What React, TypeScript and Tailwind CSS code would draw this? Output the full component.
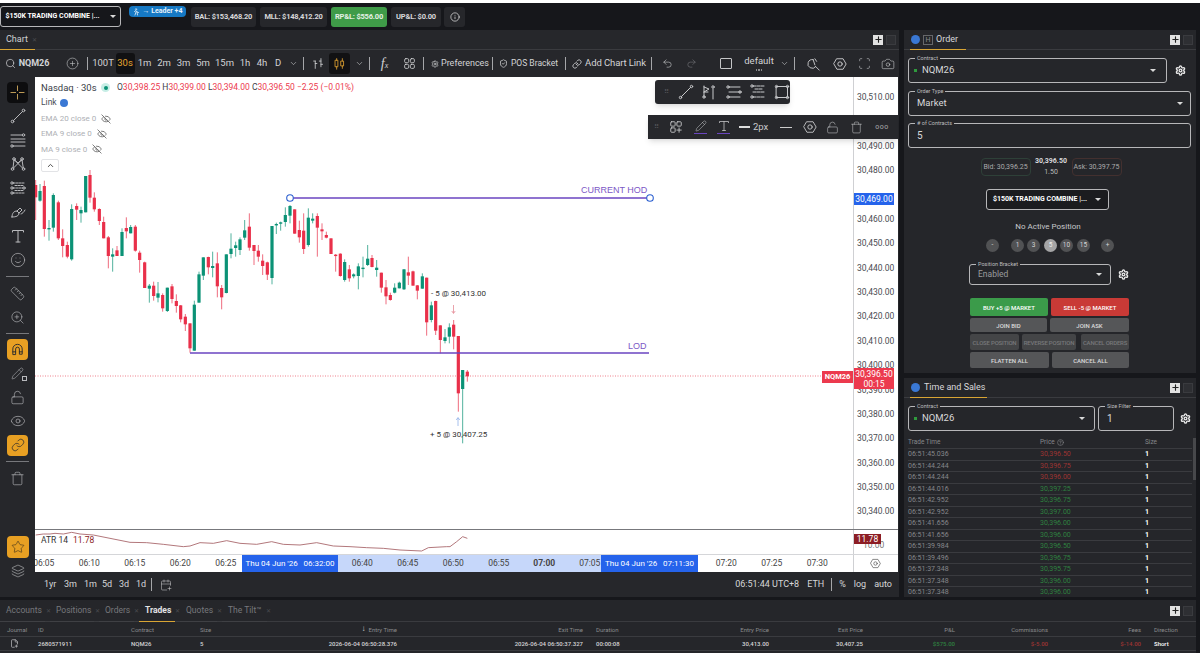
import React from "react";
import { Search, CirclePlus, ChevronDown, ChevronUp, Undo2, Redo2, Scan, Camera, Smile, Ruler, ZoomIn, LockOpen, Eye, EyeOff, Link, Trash, Star, Layers, Pencil, Settings, ShieldCheck, Info, FilePlus2, CalendarPlus, CircleHelp, Plus } from "lucide-react";

const Z = (c: any[], ox: number, oy: number) => c.map(([x, h, t, b, l, col]) => ({ x: ox + x / 3, h: oy + h / 3, t: oy + t / 3, b: oy + b / 3, l: oy + l / 3, col }));
const A: any[] = [
[17,60,75,112,180,"r"],[30,72,93,122,125,"g"],[43,62,78,207,230,"r"],[57,180,204,206,242,"g"],[70,100,105,203,215,"g"],[85,122,127,235,240,"r"],[98,208,235,258,292,"r"],[112,245,255,290,295,"r"],[125,133,147,298,302,"g"],[140,130,138,149,180,"r"],[153,140,150,160,188,"g"],[167,48,48,157,157,"g"],[180,30,45,113,128,"r"],[193,97,113,148,155,"r"],[208,145,147,183,195,"r"],[221,170,186,235,235,"r"],[235,228,232,288,325,"r"],[248,265,283,290,335,"g"],[261,258,271,288,288,"r"],[276,205,216,288,288,"g"],[289,172,204,214,235,"r"],[302,195,201,220,220,"g"],[316,195,200,272,275,"r"],[329,272,278,300,338,"r"],[344,305,307,384,384,"r"],[358,372,377,386,428,"g"],[371,365,377,408,422,"r"],[384,366,400,413,427,"g"],[398,400,405,445,455,"r"],[412,383,383,453,456,"g"],[426,372,379,417,430,"r"],[439,403,423,438,458,"r"],[452,435,436,478,487,"r"],[466,462,470,493,513,"r"],[480,490,490,565,578,"r"],[493,422,434,572,572,"g"],[507,335,343,428,428,"g"],[520,292,292,347,360,"g"],[535,290,291,322,343,"r"],[548,275,318,324,352,"g"],[562,277,310,379,412,"r"],[575,375,384,412,448,"r"],[589,283,283,399,400,"g"],[603,220,266,282,295,"g"],[617,245,256,264,290,"g"],[630,232,238,270,285,"g"],[644,180,211,233,240,"g"],[658,160,200,263,272,"r"],[672,255,255,273,315,"r"],[685,255,272,290,305,"r"],[698,283,302,318,345,"r"],[712,305,307,344,360,"r"]];
const B: any[] = [
[36,138,138,294,313,"g"],[49,128,132,136,162,"g"],[62,125,127,131,152,"g"],[76,82,105,126,140,"g"],[90,75,78,107,130,"g"],[104,88,88,161,161,"r"],[118,122,150,172,188,"r"],[131,100,152,207,222,"r"],[145,85,113,195,200,"g"],[158,100,116,122,130,"g"],[172,100,108,143,230,"r"],[186,130,148,154,180,"r"],[199,155,165,173,175,"r"],[213,175,175,222,222,"r"],[227,222,224,226,275,"r"],[241,220,221,288,290,"r"],[254,238,246,300,305,"g"],[268,255,268,295,305,"r"],[281,280,283,289,295,"g"],[295,250,259,288,328,"g"],[309,230,263,265,292,"g"],[323,195,236,255,258,"g"],[336,225,234,261,262,"r"],[350,240,263,270,290,"g"],[364,278,278,323,338,"r"],[378,300,322,349,373,"r"],[391,338,345,360,362,"r"],[404,310,323,338,340,"g"],[418,305,308,325,325,"g"],[432,267,268,328,330,"g"],[445,230,277,287,315,"r"],[459,272,274,317,317,"r"],[472,315,316,332,358,"r"],[487,280,289,326,326,"g"],[500,293,293,427,467,"r"],[514,365,376,420,427,"g"],[527,362,363,452,465,"r"],[541,436,436,480,520,"r"],[555,447,472,483,490,"g"],[568,430,442,470,490,"g"],[581,420,434,470,508,"r"],[595,468,468,640,695,"r"],[608,570,570,627,790,"g"],[622,570,575,589,605,"r"]];
const candles = [...Z(A, 30, 160), ...Z(B, 260, 180)];
const atr6 = [[107,45],[130,42],[150,42],[165,40],[190,42],[215,37],[240,42],[280,45],[330,55],[390,67],[440,68],[490,73],[550,80],[570,78],[600,68],[640,70],[680,62],[720,70],[770,73],[815,65],[850,73],[900,75],[950,68],[1000,78],[1050,80],[1100,83],[1150,85],[1200,90],[1265,93],[1285,83],[1340,80]];
const atr7 = [[0,80],[20,65],[38,50],[52,55]];
const atrPts = [...atr6.map(([x, y]) => [x / 3, y / 3 + 520]), ...atr7.map(([x, y]) => [450 + x / 3, y / 3 + 520])].map((p) => p.join(",")).join(" ");

const Ic = ({ children, s = 16, className = "" }: any) => (
  <svg width={s} height={s} viewBox="0 0 16 16" fill="none" stroke="currentColor" strokeWidth="1" strokeLinecap="round" strokeLinejoin="round" className={className}>{children}</svg>
);
const Rail = ({ children, active }: any) => (
  <div className={"w-full h-[24px] flex items-center justify-center text-[#b9babd]"}>
    <div className={"w-[21px] h-[21px] rounded-[4px] flex items-center justify-center " + (active === "dark" ? "bg-[#0d0d0f]" : active ? "bg-[#e8a023] text-[#2a2a2d]" : "")}>{children}</div>
  </div>
);
const RSep = ({ c }: any) => <div className={"w-[23px] h-px bg-[#77787c] shrink-0 " + c} />;
const TSep = () => <div className="w-px h-[13px] bg-[#a5a6a9]" />;
const Cell = ({ w, children, c = "" }: any) => <div className={"flex items-center justify-center shrink-0 h-full " + c} style={{ width: w }}>{children}</div>;
const PanelCtl = () => (
  <div className="flex items-center gap-[3px] ml-auto mr-[3px]">
    <div className="w-[10px] h-[10px] bg-[#e2e2e2] flex items-center justify-center text-[#222]"><Plus size={9} strokeWidth={3} /></div>
    <div className="w-[10px] h-[10px] bg-[#2e2f33] border border-[#3a3b3f]" />
  </div>
);
const Dot = () => <span className="w-[9px] h-[9px] rounded-full bg-[#3a78d4] inline-block shrink-0" />;
const Field = ({ label, w, children, c = "" }: any) => (
  <div className={"relative h-[25px] border border-[#b7b7b9] rounded-[3px] flex items-center shrink-0 " + c} style={{ width: w }}>
    <span className="absolute -top-[5px] left-[6px] px-[2px] bg-[#25262a] text-[5.5px] leading-[8px] text-[#bdbdbf] whitespace-nowrap">{label}</span>
    {children}
  </div>
);
const Caret = ({ c = "" }: any) => <span className={"w-0 h-0 shrink-0 border-l-[3px] border-r-[3px] border-t-[3px] border-l-transparent border-r-transparent border-t-[#d9d9d9] " + c} />;
const Gear = ({ c = "" }: any) => <Settings size={11} strokeWidth={3} className={"text-[#e8e8e8] " + c} />;
const Act = ({ w, c = "bg-[#555658] text-[#dcdcdc]", h = "h-[16px]", children }: any) => <div className={"rounded-[2px] flex items-center justify-center text-[6px] font-medium whitespace-nowrap shrink-0 overflow-hidden " + h + " " + c} style={{ width: w }}>{children}</div>;
const Num = ({ children, on }: any) => <span className={"w-[13px] h-[13px] rounded-full flex items-center justify-center text-[6.5px] shrink-0 " + (on ? "bg-[#a5a5a6] text-[#eee]" : "bg-[#515254] text-[#d4d4d4]")}>{children}</span>;
const Stat = ({ w, children, c = "" }: any) => <div className={"h-[20px] rounded-[3px] flex items-center justify-center text-[7.5px] font-bold tracking-[-0.2px] whitespace-nowrap shrink-0 " + c} style={{ width: w }}>{children}</div>;

const prices = ["30,510.00","","30,490.00","30,480.00","","30,460.00","30,450.00","30,440.00","30,430.00","30,420.00","30,410.00","30,400.00","30,390.00","30,380.00","30,370.00","30,360.00","30,350.00","30,340.00"];
const times = ["06:05","06:10","06:15","06:20","06:25","","","06:40","06:45","06:50","06:55","07:00","07:05","","","07:20","07:25","07:30"];
const tas: [string,string,string][] = [["06:51:45.036","30,396.50","r"],["06:51:44.244","30,396.75","r"],["06:51:44.244","30,396.00","r"],["06:51:44.016","30,397.25","g"],["06:51:42.952","30,396.75","g"],["06:51:42.952","30,397.00","g"],["06:51:41.656","30,396.00","g"],["06:51:41.656","30,396.00","g"],["06:51:39.984","30,396.50","g"],["06:51:39.496","30,396.75","g"],["06:51:37.348","30,395.75","g"],["06:51:37.348","30,396.00","g"],["06:51:37.348","30,396.00","g"]];
const bottomCols = "grid grid-cols-[38px_93px_69px_60px_137px_186px_13px_80px_93px_94px_92px_93px_93px_13px_55px]";

function Tools() {
  return (
    <div className="flex items-center h-full text-[9.5px] text-[#d3d4d6] whitespace-nowrap">
      <Cell w={5} /><Search size={11} strokeWidth={1.5} className="shrink-0" />
      <Cell w={33} c="font-bold text-[9px] pl-[3px]">NQM26</Cell>
      <Cell w={35} c="pl-[12px]"><CirclePlus size={13} strokeWidth={1} /></Cell>
      <Cell w={6}><TSep /></Cell>
      <Cell w={25} c="pl-[1px]">100T</Cell>
      <Cell w={20}><span className="w-[19px] h-[21px] bg-[#111113] rounded-[3px] text-[#e5a531] flex items-center justify-center">30s</span></Cell>
      <Cell w={19}>1m</Cell><Cell w={20}>2m</Cell><Cell w={19}>3m</Cell><Cell w={20}>5m</Cell><Cell w={23}>15m</Cell><Cell w={18}>1h</Cell><Cell w={16}>4h</Cell><Cell w={16}>D</Cell>
      <Cell w={14}><ChevronDown size={9} strokeWidth={1.5} /></Cell>
      <Cell w={7}><TSep /></Cell>
      <Cell w={22}><Ic s={13}><path d="M4 14V5M4 5H2M4 8h2M11 12V2M11 5H9M11 9h2" /></Ic></Cell>
      <Cell w={21}><span className="w-[21px] h-[21px] bg-[#111113] rounded-[3px] flex items-center justify-center text-[#e5a531]"><Ic s={13}><rect x="3" y="4" width="3" height="8" /><path d="M4.5 2v2M4.5 12v3" /><rect x="10" y="5" width="3" height="6" /><path d="M11.5 2v3M11.5 11v3" /></Ic></span></Cell>
      <Cell w={18}><ChevronDown size={9} strokeWidth={1.5} /></Cell>
      <Cell w={2}><TSep /></Cell>
      <Cell w={29} c="italic text-[14px] [font-family:'Liberation_Serif',serif]">f<span className="text-[8px] mt-[5px]">x</span></Cell>
      <Cell w={20}><Ic s={13}><rect x="2" y="2" width="5" height="5" rx="1.5" /><rect x="9" y="2" width="5" height="5" rx="1.5" /><rect x="2" y="9" width="5" height="5" rx="1.5" /><rect x="9" y="9" width="5" height="5" rx="1.5" /></Ic></Cell>
      <Cell w={5} c="pl-[4px]"><TSep /></Cell>
      <Cell w={68} c="gap-[2px] pl-[4px] text-[9px]"><Settings size={8} /><span>Preferences</span></Cell>
      <Cell w={1}><TSep /></Cell>
      <Cell w={72} c="gap-[3px] text-[8.5px] justify-start pl-[6px]"><ShieldCheck size={9} /><span>POS Bracket</span></Cell>
      <Cell w={1}><TSep /></Cell>
      <Cell w={85} c="gap-[3px] pl-[1px] text-[9.5px] tracking-[-0.1px]"><Link size={10} /><span>Add Chart Link</span></Cell>
      <Cell w={1}><TSep /></Cell>
      <Cell w={27} c="pl-[3px]"><Undo2 size={11} strokeWidth={1.25} /></Cell>
      <Cell w={24} c="text-[#77787c]"><Redo2 size={11} strokeWidth={1.25} /></Cell>
      <Cell w={45}><span className="w-[12px] h-[11px] border border-[#c4c5c7] rounded-[1px]" /></Cell>
      <Cell w={22} c="flex-col leading-[10px] text-[9.5px]"><span>default</span><span className="mt-[3px] flex gap-[1px]"><span className="w-[1.5px] h-[1.5px] bg-[#8a8b8d]" /><span className="w-[1.5px] h-[1.5px] bg-[#8a8b8d]" /><span className="w-[1.5px] h-[1.5px] bg-[#8a8b8d]" /></span></Cell>
      <Cell w={29}><ChevronDown size={9} strokeWidth={1.5} /></Cell>
      <Cell w={1} c="-ml-[5px]"><TSep /></Cell>
      <Cell w={29} c="ml-[4px]"><Ic s={14}><path d="M7 3a5 5 0 1 0 3 8" /><path d="M7 3l2 6M10 11l4 4M9 2l2 3" /></Ic></Cell>
      <Cell w={24}><Ic s={14}><path d="M4.5 2h7L15 8l-3.5 6h-7L1 8z" /><circle cx="8" cy="8" r="2.5" /></Ic></Cell>
      <Cell w={24}><Scan size={13} strokeWidth={1} /></Cell>
      <Cell w={24}><Camera size={14} strokeWidth={1} /></Cell>
    </div>
  );
}

function RailCol() {
  return (
    <div className="w-[35px] h-[520px] shrink-0 flex flex-col items-center pt-[3px]">
      <Rail active="dark"><Ic s={15}><path d="M8 1v5M8 10v5M1 8h5M10 8h5" stroke="#c9a35a" /></Ic></Rail>
      <Rail><Ic><circle cx="2.5" cy="13.5" r="1.3" /><circle cx="13.5" cy="2.5" r="1.3" /><path d="M3.5 12.5l9-9" /></Ic></Rail>
      <Rail><Ic><path d="M1 3h11M1 7h14M1 10h14M3 14h12" /><circle cx="13.5" cy="3" r="1.2" /><circle cx="2" cy="14" r="1.2" /></Ic></Rail>
      <Rail><Ic><circle cx="2.5" cy="13" r="1.3" /><circle cx="13.5" cy="13" r="1.3" /><circle cx="4" cy="3" r="1.3" /><circle cx="12" cy="3" r="1.3" /><path d="M3 12l1-8M4.5 4l8 8M11.5 4l-8 8M12 4l1.3 8M4 3.5L8 7l4-3.5" /></Ic></Rail>
      <Rail><Ic><circle cx="2" cy="3" r="1.2" /><circle cx="2" cy="8" r="1.2" /><circle cx="2" cy="13" r="1.2" /><circle cx="14" cy="8" r="1.2" /><path d="M3 3h12M3 8h10M3 13h12M5 5.5h8M5 10.5h8" strokeDasharray="2 1" /></Ic></Rail>
      <Rail><Ic><path d="M2 13c0-4 2-6 5-6l2 2c0 3-3 4-7 4zM7 7l3-3 2 2-3 3M11 10c1 0 3-2 4-4" /></Ic></Rail>
      <Rail><Ic><path d="M2.5 4V2.5h11V4M8 2.5V14M6 14h4" /></Ic></Rail>
      <Rail><Smile size={16} strokeWidth={1} /></Rail>
      <RSep c="mt-[4px] mb-[4px]" />
      <Rail><Ruler size={15} strokeWidth={1} /></Rail>
      <Rail><ZoomIn size={15} strokeWidth={1} /></Rail>
      <RSep c="mt-[4px] mb-[3px]" />
      <Rail active><Ic s={15}><path d="M3 13V7.5a5 5 0 0 1 10 0V13h-3V7.5a2 2 0 0 0-4 0V13zM3 10.5h3M10 10.5h3" /></Ic></Rail>
      <Rail><span className="relative flex"><Pencil size={13} strokeWidth={1} /><span className="absolute -right-[3px] -bottom-[1px] w-[5px] h-[5px] border border-[#b9babd] bg-[#26272b]" /></span></Rail>
      <Rail><LockOpen size={15} strokeWidth={1} /></Rail>
      <Rail><Eye size={16} strokeWidth={1} /></Rail>
      <Rail active><Link size={14} strokeWidth={1.25} /></Rail>
      <RSep c="mt-[4px] mb-[4px]" />
      <Rail><Trash size={15} strokeWidth={1} /></Rail>
      <div className="mt-auto w-[22px] h-[22px] bg-[#e8a023] rounded-[4px] flex items-center justify-center text-[#33291a]"><Star size={14} strokeWidth={1} /></div>
      <div className="h-[24px] mt-[1px] mb-[14px] flex items-center text-[#c7c8ca]"><Layers size={14} strokeWidth={1} /></div>
    </div>
  );
}

function Canvas() {
  return (
    <div className="relative flex-1 h-[452px] overflow-hidden">
      <svg width="818" height="452" viewBox="35 77 818 452" className="absolute left-0 top-0">
        <line x1="35" y1="376" x2="853" y2="376" stroke="#e8475a" strokeWidth="0.7" strokeDasharray="1 1.5" />
        {candles.map((c, i) => {
          const col = c.col === "r" ? "#e9304a" : "#0b9276";
          return (
            <g key={i}>
              <line x1={c.x} x2={c.x} y1={c.h} y2={c.l} stroke={col} strokeWidth="1" opacity="0.7" />
              <rect x={c.x - 1.6} y={c.t} width="3.2" height={Math.max(c.b - c.t, 1.4)} fill={col} />
            </g>
          );
        })}
        <line x1="290" y1="198" x2="650" y2="198" stroke="#6a45c0" strokeWidth="1.3" />
        <line x1="190" y1="353" x2="649" y2="353" stroke="#6a45c0" strokeWidth="1.3" />
        <circle cx="290" cy="198" r="3.3" fill="#fff" stroke="#2b5fd0" strokeWidth="1.1" />
        <circle cx="650" cy="198" r="3.3" fill="#fff" stroke="#2b5fd0" strokeWidth="1.1" />
        <path d="M453.5 305v8M451.8 311l1.7 2.5 1.7-2.5" stroke="#e58a95" strokeWidth="0.8" fill="none" />
        <path d="M458 418v8M456.3 420l1.7-2.5 1.7 2.5" stroke="#8fb0e8" strokeWidth="0.8" fill="none" />
      </svg>
      <span className="absolute left-[546px] top-[107px] text-[9px] leading-[12px] text-[#7c58c6] [font-family:'Liberation_Sans',sans-serif] whitespace-nowrap">CURRENT HOD</span>
      <span className="absolute left-[593px] top-[263px] text-[9px] leading-[12px] text-[#7c58c6] [font-family:'Liberation_Sans',sans-serif]">LOD</span>
      <span className="absolute left-[396px] top-[211px] text-[8px] leading-[12px] text-[#333] whitespace-nowrap">- 5 @ 30,413.00</span>
      <span className="absolute left-[395px] top-[352px] text-[8px] leading-[12px] text-[#333] whitespace-nowrap">+ 5 @ 30,407.25</span>
      <span className="absolute left-[787px] top-[294px] w-[31px] h-[12px] bg-[#ec3a4e] text-white text-[7.5px] font-bold flex items-center justify-center">NQM26</span>
      <div className="absolute left-[6px] top-[3px] flex flex-col text-[8px] leading-[15.4px] text-[#aeb0b5]">
        <div className="flex items-center text-[8.5px] text-[#ec3a4e] whitespace-nowrap">
          <span className="w-[60px] text-[9.5px] text-[#3a3e48]">Nasdaq · 30s</span>
          <span className="w-[9px] h-[9px] rounded-full bg-[#c7eee6] flex items-center justify-center"><span className="w-[4px] h-[4px] rounded-full bg-[#0b9276]" /></span>
          <span className="ml-[7px]"><span className="text-[#3a3e48]">O</span>30,398.25 <span className="text-[#3a3e48]">H</span>30,399.00 <span className="text-[#3a3e48]">L</span>30,394.00 <span className="text-[#3a3e48]">C</span>30,396.50 −2.25 (−0.01%)</span>
        </div>
        <div className="flex items-center gap-[3px] text-[8.5px] text-[#4a4e58]">Link <span className="w-[8px] h-[8px] rounded-full bg-[#3a78d4]" /></div>
        <div className="flex items-center gap-[5px]">EMA 20 close 0 <EyeOff size={10} className="text-[#666]" /></div>
        <div className="flex items-center gap-[5px]">EMA 9 close 0 <EyeOff size={10} className="text-[#666]" /></div>
        <div className="flex items-center gap-[5px]">MA 9 close 0 <EyeOff size={10} className="text-[#666]" /></div>
        <div className="mt-[2px] w-[18px] h-[13px] border border-[#e2e3e6] rounded-[2px] flex items-center justify-center text-[#444]"><ChevronUp size={9} strokeWidth={2.5} /></div>
      </div>
    </div>
  );
}

function FloatBars() {
  return (
    <>
      <div className="absolute left-[620px] top-[3px] w-[135px] h-[24px] bg-[#27282c] rounded-[3px] shadow-md flex items-center text-[#c9cacc]">
        <span className="w-[14px] ml-[4px] text-[#55565a] text-[7px] leading-[7px] text-center">⠿</span>
        <span className="ml-[5px] flex items-center gap-[8px]">
          <Ic><circle cx="2.5" cy="13.5" r="1.2" /><circle cx="13.5" cy="2.5" r="1.2" /><path d="M3.5 12.5l9-9" /></Ic>
          <Ic><path d="M2 2v11M2 3l5 2-5 3M2 8h4M11 5v10" /><circle cx="2" cy="13" r="1.2" /><circle cx="11" cy="3" r="1.2" /></Ic>
          <Ic><path d="M3 3h11M3 8h11M3 13h11" /><circle cx="2" cy="3" r="1.2" /><circle cx="14" cy="8" r="1.2" /><circle cx="2" cy="13" r="1.2" /></Ic>
          <Ic><path d="M3 2h12M3 8h12M3 13h12M5 5h8" strokeDasharray="3 1" /><circle cx="2" cy="2" r="1.2" /><circle cx="2" cy="13" r="1.2" /></Ic>
          <Ic><rect x="2.5" y="2.5" width="11" height="11" /><circle cx="2.5" cy="2.5" r="1.2" /><circle cx="13.5" cy="2.5" r="1.2" /><circle cx="2.5" cy="13.5" r="1.2" /><circle cx="13.5" cy="13.5" r="1.2" /></Ic>
        </span>
      </div>
      <div className="absolute left-[613px] top-[38px] w-[250px] h-[24px] bg-[#27282c] shadow-md flex items-center text-[#c9cacc] text-[9.5px]">
        <span className="w-[14px] ml-[1px] text-[#55565a] text-[7px] leading-[7px] text-center">⠿</span>
        <span className="ml-[6px] flex"><Ic s={14}><rect x="2" y="2" width="5" height="5" rx="1" /><rect x="9" y="2" width="5" height="5" rx="1" /><rect x="2" y="9" width="5" height="5" rx="1" /><path d="M9 11.5h5M11.5 9v5" /></Ic></span>
        <span className="ml-[11px] flex flex-col items-center gap-[1px]"><Pencil size={12} strokeWidth={1} /><span className="w-[13px] h-[1.5px] bg-[#6a45c0]" /></span>
        <span className="ml-[10px] flex flex-col items-center gap-[1px]"><Ic s={12}><path d="M2 3.5V2h12v1.5M8 2v12M6 14h4" /></Ic><span className="w-[13px] h-[1.5px] bg-[#6a45c0]" /></span>
        <span className="ml-[9px] w-[11px] h-[1.5px] bg-[#ddd]" />
        <span className="ml-[3px]">2px</span>
        <span className="ml-[12px] w-[12px] h-px bg-[#ccc]" />
        <span className="ml-[11px] flex"><Ic s={14}><path d="M4.5 2h7L15 8l-3.5 6h-7L1 8z" /><circle cx="8" cy="8" r="2.5" /></Ic></span>
        <span className="ml-[9px] flex"><LockOpen size={13} strokeWidth={1} /></span>
        <span className="ml-[11px] flex"><Trash size={13} strokeWidth={1} /></span>
        <span className="ml-[12px] text-[7px] tracking-[0.5px] text-[#a8a9ab]">ooo</span>
      </div>
    </>
  );
}

function ChartBody() {
  return (
    <div className="relative w-[863px] h-[495px] bg-white flex flex-col text-[#444]">
      <div className="flex h-[452px]">
        <Canvas />
        <div className="relative w-[45px] h-[452px] border-l border-[#cfd0d3] pt-[8px] text-[8.5px] text-[#4a4c52]">
          {prices.map((p, i) => <div key={i} className="h-[24.4px] flex items-center pl-[3px]">{p}</div>)}
          <div className="absolute left-0 top-[116px] w-[40px] h-[12px] bg-[#2563eb] text-white flex items-center justify-center">30,469.00</div>
          <div className="absolute left-0 top-[291px] w-[40px] h-[21px] bg-[#ec3a4e] text-white flex flex-col items-center justify-center leading-[10px]"><span>30,396.50</span><span>00:15</span></div>
        </div>
      </div>
      <div className="flex h-[25px] border-t border-[#77787c]">
        <div className="relative flex-1 overflow-hidden">
          <svg width="818" height="25" viewBox="35 530 818 25" className="absolute left-0 top-0"><polyline points={atrPts} fill="none" stroke="#a9686c" strokeWidth="0.9" /></svg>
          <div className="absolute left-[6px] top-[4px] flex gap-[5px] text-[8.5px] leading-[12px]"><span className="text-[#333]">ATR 14</span><span className="text-[#8c1d24]">11.78</span></div>
        </div>
        <div className="relative w-[45px] border-l border-[#cfd0d3] text-[8.5px]">
          <span className="absolute left-[9px] top-[10px] leading-[10px] text-[#777]">10.00</span>
          <span className="absolute left-0 top-[4px] w-[27px] h-[10px] bg-[#8c1d24] text-white flex items-center justify-center">11.78</span>
        </div>
      </div>
      <div className="flex h-[18px] border-t border-[#d5d6d9] text-[8.5px] text-[#444]">
        <div className="relative flex-1 overflow-hidden flex items-center">
          <div className="absolute left-[303px] top-0 w-[263px] h-full bg-[#c6d7fa]" />
          <div className="relative flex -ml-[14px]">{times.map((t, i) => <span key={i} className={"w-[45.5px] text-center shrink-0 " + (t === "07:00" ? "font-bold" : "")}>{t}</span>)}</div>
          <div className="absolute left-[207px] top-0 w-[96px] h-full bg-[#2563eb] text-white flex items-center justify-center whitespace-pre text-[8px]">Thu 04 Jun '26   06:32:00</div>
          <div className="absolute left-[566px] top-0 w-[97px] h-full bg-[#2563eb] text-white flex items-center justify-center whitespace-pre text-[8px]">Thu 04 Jun '26   07:11:30</div>
        </div>
        <div className="w-[45px] border-l border-[#cfd0d3] flex items-center justify-center text-[#555] pr-[2px]"><Ic s={11}><path d="M4.5 2h7L15 8l-3.5 6h-7L1 8z" /><circle cx="8" cy="8" r="2.5" /></Ic></div>
      </div>
      <FloatBars />
    </div>
  );
}

function RangeBar() {
  return (
    <div className="h-[25px] flex items-center text-[9px] text-[#d6d7d9] pl-[9px] pr-[6px] whitespace-nowrap">
      <span className="w-[20px]">1yr</span><span className="w-[20px]">3m</span><span className="w-[18px]">1m</span><span className="w-[17px]">5d</span><span className="w-[17px]">3d</span><span className="w-[13px]">1d</span>
      <span className="ml-[2px] w-px h-[13px] bg-[#a5a6a9]" />
      <CalendarPlus size={12} strokeWidth={1} className="ml-[8px]" />
      <span className="ml-auto">06:51:44 UTC+8</span><span className="ml-[8px]">ETH</span>
      <span className="ml-[7px] w-px h-[13px] bg-[#a5a6a9]" />
      <span className="ml-[7px]">%</span><span className="ml-[8px]">log</span><span className="ml-[8px]">auto</span>
    </div>
  );
}

function OrderPanel() {
  return (
    <div className="h-[343px] bg-[#25262a] flex flex-col text-[#d8d8da]">
      <div className="h-[20px] flex items-center border-b border-[#3a3b3f] relative pl-[7px] shrink-0">
        <Dot /><span className="ml-[3px] w-[10px] h-[10px] border border-[#66676a] text-[7px] leading-[8px] text-center text-[#8a8b8d]">H</span>
        <span className="ml-[3px] text-[9px]">Order</span>
        <span className="absolute left-[6px] bottom-[-1px] w-[56px] h-[1px] bg-[#d9a534]" />
        <PanelCtl />
      </div>
      <div className="px-[4px] pt-[8px] flex items-center">
        <Field label="Contract" w={259}><span className="ml-[5px] w-[3px] h-[3px] bg-[#2f9a3d]" /><span className="ml-[5px] text-[9.5px]">NQM26</span><Caret c="ml-auto mr-[10px]" /></Field>
        <Gear c="ml-[8px]" />
      </div>
      <div className="px-[4px] pt-[8px]"><Field label="Order Type" w={283}><span className="ml-[8px] text-[9.5px]">Market</span><Caret c="ml-auto mr-[7px]" /></Field></div>
      <div className="px-[4px] pt-[7px]"><Field label="# of Contracts" w={283}><span className="ml-[8px] text-[10px]">5</span></Field></div>
      <div className="mt-[8px] flex items-center justify-center gap-[5px] text-[7px] pl-[2px] whitespace-nowrap">
        <span className="w-[50px] h-[18px] rounded-[4px] border border-[#2e4038] flex items-center justify-center text-[#aaa]">Bid: 30,396.25</span>
        <span className="w-[31px] flex flex-col items-center leading-[11px]"><b className="font-bold">30,396.50</b><span className="text-[#bbb]">1.50</span></span>
        <span className="w-[50px] h-[18px] rounded-[4px] border border-[#43302f] flex items-center justify-center text-[#aaa]">Ask: 30,397.75</span>
      </div>
      <div className="mt-[11px] mx-auto -translate-x-[3px] w-[123px] h-[21px] border border-[#b7b7b9] rounded-[3px] bg-[#1b1c1f] flex items-center justify-center text-[7px] font-bold text-white gap-[8px] whitespace-nowrap">$150K TRADING COMBINE |... <Caret /></div>
      <div className="mt-[11px] text-center text-[8px] text-[#c8c8ca] pr-[4px] leading-[12px]">No Active Position</div>
      <div className="mt-[6px] flex items-center pl-[82px] h-[13px]">
        <Num>-</Num><span className="w-[12px]" /><Num>1</Num><span className="w-[3px]" /><Num>3</Num><span className="w-[4px]" /><Num on>5</Num><span className="w-[3px]" /><Num>10</Num><span className="w-[4px]" /><Num>15</Num><span className="w-[11px]" /><Num>+</Num>
      </div>
      <div className="mt-[12px] pl-[65px] flex items-center">
        <Field label="Position Bracket" w={142} c="!h-[21px]"><span className="ml-[8px] text-[8.5px] text-[#9b9c9e]">Enabled</span><Caret c="ml-auto mr-[8px]" /></Field>
        <Gear c="ml-[7px]" />
      </div>
      <div className="mt-[13px] pl-[66px] flex flex-col gap-[2px]">
        <div className="flex gap-[3px]"><Act w={78} h="h-[18px] text-[6.5px]" c="bg-[#3b9b4a] text-white">BUY +5 @ MARKET</Act><Act w={78} h="h-[18px] text-[6.5px]" c="bg-[#c93a36] text-white">SELL -5 @ MARKET</Act></div>
        <div className="flex gap-[3px]"><Act w={77} h="h-[14px]">JOIN BID</Act><Act w={79} h="h-[14px]">JOIN ASK</Act></div>
        <div className="flex gap-[3px]"><Act w={49} c="bg-[#444547] text-[#77787a] tracking-[-0.2px]">CLOSE POSITION</Act><Act w={54} c="bg-[#444547] text-[#77787a] tracking-[-0.2px]">REVERSE POSITION</Act><Act w={48} c="bg-[#444547] text-[#77787a] ml-[2px] tracking-[-0.2px]">CANCEL ORDERS</Act></div>
        <div className="flex gap-[3px]"><Act w={79}>FLATTEN ALL</Act><Act w={77}>CANCEL ALL</Act></div>
      </div>
    </div>
  );
}

function TasPanel() {
  return (
    <div className="relative h-[219px] mt-[5px] bg-[#25262a] flex flex-col text-[#d8d8da] overflow-hidden">
      <div className="h-[20px] flex items-center border-b border-[#3a3b3f] relative pl-[7px] shrink-0">
        <Dot /><span className="ml-[4px] text-[9px]">Time and Sales</span>
        <span className="absolute left-[6px] bottom-[-1px] w-[77px] h-[1px] bg-[#d9a534]" />
        <PanelCtl />
      </div>
      <div className="px-[4px] pt-[8px] flex items-center">
        <Field label="Contract" w={187}><span className="ml-[5px] w-[3px] h-[3px] bg-[#2f9a3d]" /><span className="ml-[5px] text-[9.5px]">NQM26</span><Caret c="ml-auto mr-[9px]" /></Field>
        <Field label="Size Filter" w={76} c="ml-[3px]"><span className="ml-[8px] text-[10px]">1</span></Field>
        <Gear c="ml-[6px]" />
      </div>
      <div className="mt-[6px] px-[4px] text-[6.5px] text-[#85868a] [&>div]:grid [&>div]:grid-cols-[132px_105px_1fr] [&>div]:items-center">
        <div className="h-[12px] border-b border-[#3a3b3f]"><span>Trade Time</span><span className="flex items-center gap-[2px]">Price <CircleHelp size={7} /></span><span>Size</span></div>
        {tas.map(([t, p, c], i) => (
          <div key={i} className="h-[11.5px] border-b border-[#3a3b3f] text-[7px]"><span>{t}</span><span className={c === "r" ? "text-[#9c3433]" : "text-[#2f8040]"}>{p}</span><span className="text-white font-bold">1</span></div>
        ))}
      </div>
      <div className="absolute right-[0px] top-[60px] w-[3px] h-[42px] bg-[#47484b]" />
    </div>
  );
}

function Bottom() {
  const Tab = ({ t, w, on }: any) => (
    <div className="relative h-full flex items-center pl-[6px] shrink-0 whitespace-nowrap" style={{ width: w }}>
      <span className={on ? "font-bold text-[#e2e2e4]" : "text-[#77787c]"}>{t}</span>
      <span className="ml-[4px] text-[6px] text-[#4a4b4f]">✕</span>
      <span className={"absolute left-[0px] right-[5px] -bottom-px h-px " + (on ? "bg-[#d9a534]" : "bg-[#3f4044]")} />
    </div>
  );
  return (
    <div className="mt-[3px] w-[1196px] h-[53px] bg-[#25262a] flex flex-col shrink-0">
      <div className="h-[22px] flex items-center border-b border-[#3a3b3f] text-[8.5px]">
        <Tab t="Accounts" w={50} /><Tab t="Positions" w={49} /><Tab t="Orders" w={40} /><Tab t="Trades" w={41} on /><Tab t="Quotes" w={42} /><Tab t="The Tilt™" w={50} />
        <PanelCtl />
      </div>
      <div className={bottomCols + " h-[15px] items-center text-[6px] text-[#8a8b8d] border-b border-[#3a3b3f] whitespace-nowrap"}>
        <span className="pl-[7px]">Journal</span><span>ID</span><span>Contract</span><span>Size</span>
        <span className="text-right flex justify-end items-center gap-[3px]"><span className="text-[#d0d0d0] text-[8px]">↓</span> Entry Time</span><span className="text-right">Exit Time</span><span /><span>Duration</span>
        <span className="text-right">Entry Price</span><span className="text-right">Exit Price</span><span className="text-right">P&amp;L</span><span className="text-right">Commissions</span><span className="text-right">Fees</span><span /><span>Direction</span>
      </div>
      <div className={bottomCols + " h-[14px] items-center text-[6px] text-[#d5d5d7] font-medium border-b border-[#3a3b3f] whitespace-nowrap"}>
        <span className="pl-[10px] text-[#b5b6b8]"><FilePlus2 size={9} /></span><span>2680571911</span><span>NQM26</span><span>5</span>
        <span className="text-right">2026-06-04 06:50:28.376</span><span className="text-right">2026-06-04 06:50:37.327</span><span /><span>00:00:08</span>
        <span className="text-right">30,413.00</span><span className="text-right">30,407.25</span><span className="text-right text-[#2f8040]">$575.00</span><span className="text-right text-[#9c3433]">$-5.00</span><span className="text-right text-[#9c3433]">$-14.00</span><span /><span className="text-white">Short</span>
      </div>
    </div>
  );
}

export default function App() {
  return (
    <div className="w-[1200px] h-[653px] overflow-hidden bg-[#16171b] [font-family:Roboto,sans-serif] flex flex-col">
      <div className="h-[3px] bg-white shrink-0" />
      <div className="h-[27px] flex items-center shrink-0 text-white">
        <div className="w-[121px] h-[21px] border border-[#b7b7b9] rounded-[3px] flex items-center justify-center gap-[10px] text-[7px] font-bold whitespace-nowrap shrink-0">$150K TRADING COMBINE |... <Caret /></div>
        <div className="ml-[8px] -mt-[10px] w-[57px] h-[11px] rounded-[4px] bg-[#1679c4] flex items-center justify-center gap-[2px] text-[7px] font-bold text-[#e6f1fa] whitespace-nowrap shrink-0">
          <Ic s={8}><circle cx="6" cy="2.5" r="1.5" /><path d="M3 7l3-2 2 3 3 1M6 8l-2 6M8 8l1 6" strokeWidth="1.6" /></Ic>
          <span>→ Leader +4</span>
        </div>
        <Stat w={65} c="ml-[5px] bg-[#26272b] text-[#d8d8da]">BAL: $153,468.20</Stat>
        <Stat w={67} c="ml-[4px] bg-[#26272b] text-[#d8d8da]">MLL: $148,412.20</Stat>
        <Stat w={56} c="ml-[4px] bg-[#3f9b48] text-[#e4f1e5]">RP&amp;L: $556.00</Stat>
        <Stat w={50} c="ml-[4px] bg-[#26272b] text-[#d8d8da]">UP&amp;L: $0.00</Stat>
        <div className="ml-[3px] w-[21px] h-[20px] bg-[#26272b] rounded-[3px] flex items-center justify-center"><Info size={10} strokeWidth={1.5} /></div>
      </div>
      <div className="flex h-[567px] shrink-0">
        <div className="w-[899px] h-full bg-[#26272b] flex flex-col">
          <div className="h-[20px] flex items-center relative border-b border-[#3a3b3f] text-[9px] text-[#d0d1d3] pl-[6px] shrink-0">
            <span>Chart</span><span className="ml-[4px] text-[6px] text-[#4a4b4f]">✕</span>
            <span className="absolute left-0 -bottom-px w-[35px] h-px bg-[#d9a534]" />
            <PanelCtl />
          </div>
          <div className="h-[27px] shrink-0"><Tools /></div>
          <div className="flex">
            <RailCol />
            <div className="flex flex-col">
              <ChartBody />
              <RangeBar />
            </div>
          </div>
        </div>
        <div className="ml-[5px] w-[292px] h-full flex flex-col">
          <OrderPanel />
          <TasPanel />
        </div>
      </div>
      <Bottom />
    </div>
  );
}
